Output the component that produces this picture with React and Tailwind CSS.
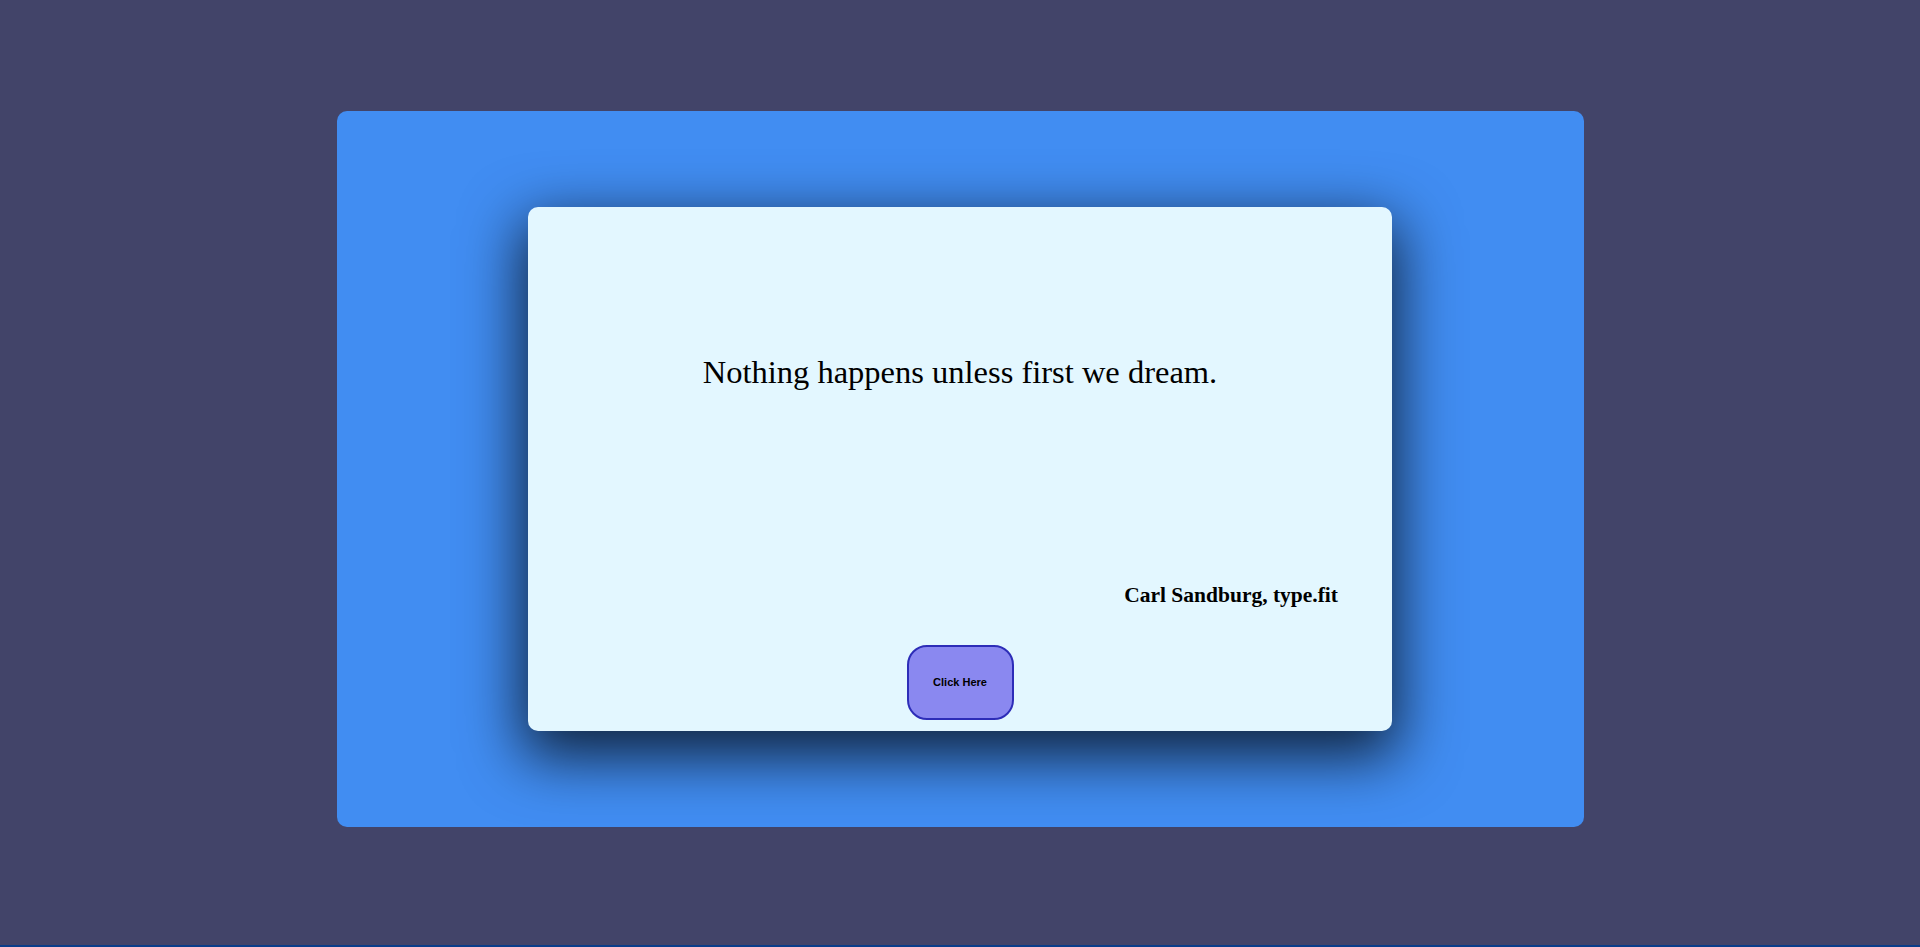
import React from 'react'

const App = () => {
    return (
        <div className="w-full min-h-screen bg-[#424469] flex flex-col" style={{ fontFamily: '"Liberation Serif", "Times New Roman", serif' }}>
            <main className="h-[945px] flex justify-center pt-[111px]">
                {/* Outer panel */}
                <section className="w-[1247px] h-[716px] bg-[#418df2] rounded-[10px] flex items-center justify-center">
                    {/* Quote card */}
                    <div className="w-[864px] h-[524px] bg-[#e3f7ff] rounded-[10px] shadow-[0_20px_60px_6px_rgba(0,0,0,0.75)] flex flex-col">
                        <p className="mt-[149px] text-center text-[32.5px] leading-none text-black">
                            Nothing happens unless first we dream.
                        </p>
                        <p className="mt-[196px] self-end pr-[54px] text-[21.5px] leading-none font-bold text-black">
                            Carl Sandburg, type.fit
                        </p>
                        <button
                            type="button"
                            className="mt-[39px] self-center w-[107px] h-[75px] rounded-[20px] border-2 border-[#2d2db8] bg-[#8a88f0] text-[11px] font-bold text-black"
                            style={{ fontFamily: '"Liberation Sans", Arial, sans-serif' }}
                        >
                            Click Here
                        </button>
                    </div>
                </section>
            </main>
            <div className="h-[2px] bg-[#0a3d8a]"></div>
        </div>
    )
}

export default App
